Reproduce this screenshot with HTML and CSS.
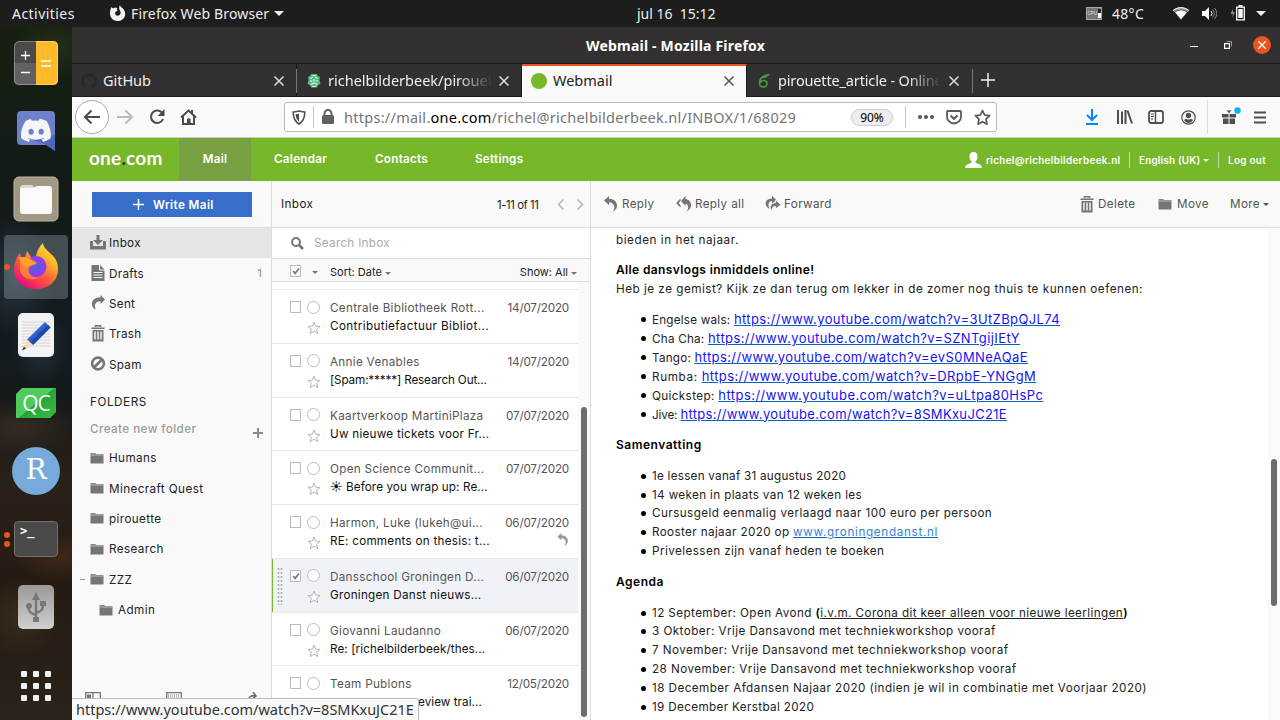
FILE: index.html
```html
<!DOCTYPE html>
<html lang="en">
<head>
<meta charset="utf-8">
<title>Webmail - Mozilla Firefox</title>
<link rel="stylesheet" href="styles.css">
</head>
<body>
<svg class="defs" width="0" height="0" aria-hidden="true">
  <defs>
    <symbol id="folder" viewBox="0 0 14 12"><path d="M.5 1h4.700l1 1h7.300v1H.5z" fill="#8a8a8a"/><path d="M.5 3h13v8.500H.5z" fill="#757575"/><path d="M.5 3.200h13" stroke="#c4c4c4" stroke-width=".7"/></symbol>
    <symbol id="close" viewBox="0 0 12 12"><path d="M1.500 1.500l9 9m0-9l-9 9" fill="none" stroke="currentColor" stroke-width="1.500"/></symbol>
    <symbol id="reply" viewBox="0 0 14 16"><path d="M0 4.500L5 0v2.700c5 .2 8 3 8 6.800 0 2.700-1.500 5-4.500 6.200 1.500-2 2.300-3.600 1.700-5.200C9.600 8 8 6.300 5 6.300V9z" fill="currentColor"/></symbol>
    <symbol id="trash" viewBox="0 0 14 17"><path d="M4.500 2V.8h5V2M.5 3.200h13" fill="none" stroke="#757575" stroke-width="1.500"/><path d="M1.500 5h11v11.500h-11z" fill="#757575"/><path d="M4 6.500v8M7 6.500v8M10 6.500v8" stroke="#f9f9f9" stroke-width="1.400"/></symbol>
    <symbol id="star" viewBox="0 0 14 14"><path d="M7 1l1.600 4.200 4.500.2-3.500 2.800 1.200 4.500L7 10.100l-3.800 2.600 1.200-4.500L.9 5.400l4.500-.2z" fill="#fff" stroke="#b5b5b5"/></symbol>
    <symbol id="check" viewBox="0 0 12 12"><path d="M2.500 6l2.500 2.800L9.600 3" fill="none" stroke="#777" stroke-width="2"/></symbol>
  </defs>
</svg>
<div class="desktop">
  <header class="topbar">
    <span class="activities">Activities</span>
    <svg class="ff-mono" width="17" height="17" viewBox="0 0 17 17"><path d="M8.500 3.500c-1 .8-.6 1.700.2 2.200-2 .4-2.700 1.500-2.600 2.900.2 2 2.900 2.800 4.500 1.400 1.300-1.200 1.300-3 .4-4.300C10 4.400 9.700 2.500 11 0c.3 1.500 1.200 2.200 2.600 3.300 3.700 3 3.300 8.700-.3 11.300-3.800 2.800-9.500 1.500-11.500-2.500C.4 9 .8 5.500 2.400 2c.6.800 1.300 1.200 2.300 1.200C6 2 7 2.200 8.500 3.500z" fill="#f2f2f2"/></svg>
    <span class="app-name">Firefox Web Browser</span>
    <i class="caret caret-white"></i>
    <span class="clock">jul 16&nbsp; 15:12</span>
    <div class="tray">
      <svg width="16" height="13" viewBox="0 0 16 13"><path d="M0 0h16v13H0z" fill="#777"/><path d="M.5 .5h15v12H.5z" fill="none" stroke="#aaa"/><text x="1.500" y="8" font-size="4.500" fill="#ddd" font-family="Liberation Sans">CPU</text><path d="M12 2h3v4h-3z" fill="#222"/><path d="M12 6h3v5h-3z" fill="#fff"/></svg>
      <span class="temp">48°C</span>
      <svg class="wifi" width="16" height="13" viewBox="0 0 16 13"><path d="M0 3.500C4.500-.8 11.500-.8 16 3.500l-1.500 1.700C10.500 2 5.500 2 1.500 5.200z" fill="#999"/><path d="M2 5.300c3.700-2.700 8.300-2.700 12 0L8 12.500z" fill="#fff"/><path d="M0 3.500C4.500-.3 11.500-.3 16 3.500" fill="none" stroke="#fff"/></svg>
      <svg class="vol" width="15" height="13" viewBox="0 0 15 13"><path d="M0 4h3l4-4v13L3 9H0z" fill="#fff"/><path d="M9 4q2 2.500 0 5" fill="none" stroke="#fff"/><path d="M10.500 2.500q3.500 4 0 8M12.500 1q4.500 5.500 0 11" fill="none" stroke="#888"/></svg>
      <svg class="batt" width="15" height="16" viewBox="0 0 15 16"><path d="M3 3.500L.5 9H3L2 13l3-6H3z" fill="#888"/><path d="M6.700 2.200h7.600v12.600H6.700z" fill="none" stroke="#fff" stroke-width="1.300"/><path d="M8.500 0h4v2h-4zM8.300 4h4.400v9H8.300z" fill="#fff"/></svg>
      <i class="caret caret-white tray-caret"></i>
    </div>
  </header>
  <div class="below">
    <nav class="dock">
      <div class="slot"><svg width="46" height="46" viewBox="0 0 46 46"><rect x="1" y="1" width="44" height="44" rx="5" fill="#4a4a4a"/><path d="M1 23h22v22H6q-5 0-5-5z" fill="#616161"/><path d="M23 1h17q5 0 5 5v34q0 5-5 5H23z" fill="#fdbb27"/><rect x="1.500" y="1.500" width="43" height="43" rx="5" fill="none" stroke="#fff" stroke-opacity=".3"/><path d="M8 15.500h9M12.500 11v9M8 32.500h9M28 21h10M28 26h10" stroke="#fff" stroke-width="1.300"/></svg></div>
      <div class="slot"><svg width="38" height="42" viewBox="0 0 38 42"><path d="M4 1h30q4 0 4 4v36l-8-6H4q-4 0-4-4V5q0-4 4-4z" fill="#6c80cb"/><path d="M38 25v16l-9-6-12-5z" fill="#5067bd"/><g transform="translate(4 5.500) scale(1.260)"><path d="M20.317 4.370a19.800 19.800 0 00-4.885-1.515.074.074 0 00-.79.037c-.21.375-.444.864-.608 1.250a18.300 18.300 0 00-5.487 0 12.600 12.600 0 00-.617-1.250.077.077 0 00-.079-.037A19.700 19.700 0 003.677 4.370C.533 9.046-.320 13.580.099 18.058a19.900 19.900 0 005.993 3.030c.462-.63.874-1.295 1.226-1.994a13 13 0 01-1.872-.892l.372-.292c3.928 1.793 8.180 1.793 12.062 0l.373.292a12.300 12.300 0 01-1.873.892c.36.698.772 1.362 1.225 1.993a19.800 19.800 0 006.002-3.030c.500-5.177-.838-9.674-3.290-13.687zM8.020 15.331c-1.183 0-2.157-1.086-2.157-2.419s.955-2.419 2.157-2.419c1.210 0 2.176 1.095 2.157 2.419 0 1.333-.956 2.419-2.157 2.419zm7.975 0c-1.183 0-2.157-1.086-2.157-2.419s.955-2.419 2.157-2.419c1.210 0 2.176 1.095 2.157 2.419 0 1.333-.946 2.419-2.157 2.419z" fill="#f5f5f5"/></g></svg></div>
      <div class="slot"><svg width="46" height="46" viewBox="0 0 46 46"><rect x="1" y="1" width="44" height="44" rx="5" fill="#a09882" stroke="#bbb5a2"/><path d="M7 12q0-3 3-3h9l4 4H7z" fill="#ded9cf"/><path d="M7 14q0-2 2-2h10q2 0 3-1 1-1 3-1h11q3 0 3 3v22q0 3-3 3H10q-3 0-3-3z" fill="#fafafa"/></svg></div>
      <div class="slot"><div class="active-app"><i class="run-dot"></i><svg width="48" height="48" viewBox="0 0 48 48"><defs><linearGradient id="fx" x1="1" y1="0" x2=".3" y2="1"><stop offset="0" stop-color="#fff24a"/><stop offset=".35" stop-color="#ffb62a"/><stop offset=".65" stop-color="#ff593c"/><stop offset="1" stop-color="#e80d78"/></linearGradient><radialGradient id="fxc"><stop offset="0" stop-color="#4b5fe0"/><stop offset="1" stop-color="#9a39ef"/></radialGradient></defs><path d="M31 0c0 4 4 7 8 11 5 4 7 9 7 15 0 12-9 20-22 20S2 38 2 26c0-6 2-11 6-16l1 5 4-1 2-6 4 6 5 1c0-6 3-11 7-15z" fill="url(#fx)"/><circle cx="24" cy="23.500" r="10.500" fill="url(#fxc)"/><path d="M8 14c4 1 7 0 11 2l6 4c-3 3-6 2-8 5-2 5 3 11 10 9-6 5-17 2-19-7z" fill="#ff8137"/><path d="M7 14c6 0 10 1 12 3l6 3c-4 2-8 1-10 4-4-1-7-4-8-10z" fill="#ffa12c"/></svg></div></div>
      <div class="slot"><svg width="38" height="46" viewBox="0 0 38 46"><rect x="1" y="1" width="36" height="44" rx="5" fill="#f3f3f3"/><path d="M5 10h28M5 13h28M5 16h28M5 19h28M5 22h28M5 25h28M5 28h28M5 31h28M5 34h28" stroke="#ccc" stroke-width=".8"/><path d="M28 10l5.500 5.500L16 33l-6-5.500z" fill="#2f62d0"/><path d="M31 13l2.500 2.500L16 33l-3-3z" fill="#1d48a7"/><path d="M10 27.500l6 5.500-10 5z" fill="#ffd9b6"/><path d="M7 34.500l2 2-4 2z" fill="#333"/></svg></div>
      <div class="slot"><div class="qc">QC</div></div>
      <div class="slot"><div class="rstudio">R</div></div>
      <div class="slot"><div class="terminal"><i class="run-dot"></i><i class="run-dot"></i>&gt;_</div></div>
      <div class="slot"><svg width="38" height="46" viewBox="0 0 38 46"><defs><linearGradient id="ub" x2="0" y2="1"><stop stop-color="#999"/><stop offset="1" stop-color="#d0d0d0"/></linearGradient></defs><rect x="1" y="1" width="36" height="44" rx="5" fill="url(#ub)"/><path d="M19 36V13M19 31c-6-2-7-3-8-9M19 29c6-2 7-3 7-10" fill="none" stroke="#777" stroke-width="2.400"/><path d="M15 16l4-8 4 8zM16 33h6v5h-6zM23 17h6v5h-6z" fill="#777"/><circle cx="12" cy="22" r="3" fill="#777"/></svg></div>
      <div class="apps"><i></i><i></i><i></i><i></i><i></i><i></i><i></i><i></i><i></i></div>
    </nav>
    <main class="window">
      <div class="titlebar">
        <span class="win-title">Webmail - Mozilla Firefox</span>
        <div class="win-buttons"><i class="min"></i><svg width="8" height="8" viewBox="0 0 8 8"><path d="M2.500 .5h5v5" fill="none" stroke="#999"/><path d="M.6 2.600h4.800v4.800H.6z" fill="none" stroke="#fff" stroke-width="1.200"/></svg><b class="win-close"><svg width="10" height="10"><use href="#close"/></svg></b></div>
      </div>
      <div class="tabs">
        <div class="tab tab1"><svg width="16" height="16" viewBox="0 0 24 24"><path d="M12 .297c-6.630 0-12 5.373-12 12 0 5.303 3.438 9.800 8.205 11.385.6.113.82-.258.82-.577 0-.285-.01-1.040-.015-2.040-3.338.724-4.042-1.610-4.042-1.610C4.422 18.070 3.633 17.700 3.633 17.700c-1.087-.744.084-.729.084-.729 1.205.084 1.838 1.236 1.838 1.236 1.070 1.835 2.809 1.305 3.495.998.108-.776.417-1.305.76-1.605-2.665-.3-5.466-1.332-5.466-5.930 0-1.310.465-2.380 1.235-3.220-.135-.303-.54-1.523.105-3.176 0 0 1.005-.322 3.300 1.230.96-.267 1.980-.399 3-.405 1.020.006 2.040.138 3 .405 2.280-1.552 3.285-1.230 3.285-1.230.645 1.653.24 2.873.12 3.176.765.84 1.230 1.910 1.230 3.220 0 4.610-2.805 5.625-5.475 5.920.42.36.81 1.096.81 2.220 0 1.606-.015 2.896-.015 3.286 0 .315.21.69.825.57C20.565 22.092 24 17.592 24 12.297c0-6.627-5.373-12-12-12" fill="#24292e"/></svg><span>GitHub</span><svg class="x" width="12" height="12"><use href="#close"/></svg></div>
        <div class="tab tab2"><svg width="16" height="16" viewBox="0 0 16 16"><path d="M5 1h6l1 2 2 1-.5 3 1 4-2.500 1-1 2.500H5L4 12l-2.500-1 1-4L2 4l2-1z" fill="#53b97b"/><path d="M4.500 5.500L7 4M11.500 5.500L9 4M4 8h2.500M9.500 8H12M4.500 11.500L8 10l3.500 1.500M8 6v2.500M6 13.500h4M6.500 2.500h3" stroke="#e9fff0" stroke-width="1.100" fill="none"/></svg><span class="fade">richelbilderbeek/pirouet</span><svg class="x" width="12" height="12"><use href="#close"/></svg></div>
        <div class="tab tab3"><i class="one-dot"></i><span>Webmail</span><svg class="x" width="12" height="12"><use href="#close"/></svg></div>
        <div class="tab tab4"><svg width="14" height="16" viewBox="0 0 14 16"><path d="M12.500 1.500C7 1.500 2.500 5 2.500 10.300c0 5 7.500 5 7.500.2C10 7 5.500 6.500 3.300 9.500M6 4c2.500 1.500 3.500-1 6-2.500" fill="none" stroke="#3f9d3f" stroke-width="1.600"/></svg><span class="fade">pirouette_article - Online</span><svg class="x" width="12" height="12"><use href="#close"/></svg></div>
        <svg class="plus" width="14" height="14" viewBox="0 0 14 14"><path d="M7 0v14M0 7h14" stroke="#eee" stroke-width="1.500"/></svg>
      </div>
      <div class="navbar">
        <div class="back"><svg width="18" height="16" viewBox="0 0 18 16"><path d="M8.500 1.500L2 8l6.500 6.500M2 8h15" fill="none" stroke="#4a4a4a" stroke-width="2"/></svg></div>
        <svg class="fwd" width="18" height="16" viewBox="0 0 18 16"><path d="M9.500 1.500L16 8l-6.500 6.500M16 8H1" fill="none" stroke="#b9b9b9" stroke-width="2"/></svg>
        <svg class="reload" width="16" height="16" viewBox="0 0 16 16"><path d="M13.500 4.500A6.200 6.200 0 1 0 14 10" fill="none" stroke="#4a4a4a" stroke-width="2"/><path d="M15.500 0v7H8.700z" fill="#4a4a4a"/></svg>
        <svg class="home" width="17" height="17" viewBox="0 0 17 17"><path d="M1 8.500L8.500 1.500 16 8.500M3 7.500V15h11V7.500" fill="none" stroke="#4a4a4a" stroke-width="2"/><path d="M7 9.500h3.500V15H7z" fill="#4a4a4a"/><path d="M11 1h2v4l-2-2z" fill="#4a4a4a"/></svg>
        <div class="urlbar">
          <svg class="shield" width="14" height="15" viewBox="0 0 14 15"><path d="M7 1C5 1.500 3 2 1.200 2c0 6 1.500 9.500 5.800 12 4.300-2.500 5.800-6 5.800-12C11 2 9 1.500 7 1z" fill="none" stroke="#4f4f4f" stroke-width="1.600"/><path d="M7 3.500v8C4.500 9.500 3.800 7.500 3.600 4.200z" fill="#4f4f4f"/></svg>
          <i class="vline"></i>
          <svg class="lock" width="12" height="15" viewBox="0 0 12 15"><rect y="6" width="12" height="9" rx="1.500" fill="#606060"/><path d="M2.500 7V4.500a3.500 3.500 0 0 1 7 0V7" fill="none" stroke="#606060" stroke-width="2"/></svg>
          <span class="url">https://mail.<b>one.com</b>/richel@richelbilderbeek.nl/INBOX/1/68029</span>
          <span class="zoom">90%</span>
          <i class="vline v2"></i>
          <svg class="dots" width="16" height="4" viewBox="0 0 16 4"><circle cx="2" cy="2" r="2"/><circle cx="8" cy="2" r="2"/><circle cx="14" cy="2" r="2"/></svg>
          <svg class="pocket" width="16" height="15" viewBox="0 0 16 15"><path d="M2 1h12q1 0 1 1v4.500a7 7 0 0 1-14 0V2q0-1 1-1z" fill="none" stroke="#5a5a5a" stroke-width="1.800"/><path d="M4.500 5.500L8 8.800l3.500-3.300" fill="none" stroke="#5a5a5a" stroke-width="2"/></svg>
          <svg class="fav" width="17" height="17" viewBox="0 0 17 17"><path d="M8.500 1.500l2.200 4.600 5 .6-3.700 3.500 1 5-4.500-2.500L4 15.200l1-5L1.300 6.700l5-.6z" fill="none" stroke="#5a5a5a" stroke-width="1.700" stroke-linejoin="round"/></svg>
        </div>
        <div class="tools">
          <svg width="12" height="16" viewBox="0 0 12 16"><path d="M6 0v11M1 6l5 5 5-5M0 15h12" fill="none" stroke="#0a84ff" stroke-width="2"/></svg>
          <svg width="16" height="14" viewBox="0 0 16 14"><path d="M1 0v14M5 1.500V14M8.500 0v14M10.500 .5l4.500 13" stroke="#4f4f4f" stroke-width="2"/></svg>
          <svg width="16" height="14" viewBox="0 0 16 14"><rect x="1" y="1" width="14" height="12" rx="2" fill="none" stroke="#4f4f4f" stroke-width="1.800"/><path d="M7.500 1v12" stroke="#4f4f4f" stroke-width="1.500"/><path d="M3 4h3M3 6.500h3M3 9h2" stroke="#4f4f4f"/></svg>
          <svg width="15" height="15" viewBox="0 0 15 15"><circle cx="7.500" cy="7.500" r="6.700" fill="none" stroke="#4f4f4f" stroke-width="1.200"/><circle cx="7.500" cy="5.500" r="2.700" fill="#4f4f4f"/><path d="M3 10c1-1 1.700-1.200 2.500-1q2 1 4 0c.8-.2 1.500 0 2.500 1-2.500 4-6.500 4-9 0z" fill="#4f4f4f"/></svg>
          <i class="tool-line"></i>
          <svg class="gift" width="19" height="18" viewBox="0 0 19 18"><path d="M0 7h6.500v3.500H0zM7.500 7H14v3.500H7.500zM1 11.500h5.500V17H1zM7.500 11.500H13V17H7.500z" fill="#4f4f4f"/><path d="M7 6.500L4.500 3 7 3.500 9.500 3z" fill="#4f4f4f"/><circle cx="15.500" cy="3.500" r="3.200" fill="#00b3f4"/></svg>
          <svg width="12" height="13" viewBox="0 0 12 13"><path d="M0 1.500h12M0 6.500h12M0 11.500h12" stroke="#4f4f4f" stroke-width="2"/></svg>
        </div>
      </div>
      <div class="greenbar">
        <span class="logo">one<em>.</em>com</span>
        <span class="nav nav-mail">Mail</span><span class="nav nav-cal">Calendar</span><span class="nav nav-con">Contacts</span><span class="nav nav-set">Settings</span>
        <div class="account">
          <svg width="17" height="16" viewBox="0 0 17 16"><path d="M8.500 0c3 0 4.300 2 4 5-.2 2-1 3.500-2 4.500v1.300l4.500 1.700q2 1 2 3.500H0q0-2.500 2-3.500l4.500-1.700V9.500c-1-1-1.800-2.500-2-4.500-.3-3 1-5 4-5z" fill="#fff"/></svg>
          <span class="who">richel@richelbilderbeek.nl</span><span class="lang">English (UK)<i class="caret"></i></span><span class="logout">Log out</span>
        </div>
      </div>
      <div class="mail">
        <aside class="sidebar">
          <div class="compose-row"><div class="compose"><svg width="11" height="11" viewBox="0 0 11 11"><path d="M5.500 0v11M0 5.500h11" stroke="#fff" stroke-width="1.500"/></svg><span>Write Mail</span></div></div>
          <ul class="boxes">
            <li class="selected"><svg width="16" height="15" viewBox="0 0 16 15"><path d="M0 6h3v5h10V6h3v8.500H0z" fill="#757575"/><path d="M6.500 0h3v5H13l-5 5-5-5h3.500z" fill="#757575"/></svg>Inbox</li>
            <li><svg width="15" height="16" viewBox="0 0 15 16"><path d="M1 0h7.500v5.500H14V16H1z" fill="#757575"/><path d="M9.500 0L14 4.500H9.500z" fill="#757575"/><path d="M3 7.500h9M3 10h9M3 12.500h9" stroke="#f9f9f9"/></svg>Drafts<span class="count">1</span></li>
            <li><svg width="15" height="16" viewBox="0 0 15 16"><path d="M14.500 4.500L10 0v2.500C5 2.300 1.500 4.500 1.500 9c0 2.700 1.500 4.700 4 5.500C4 12 4 9.500 5.200 8.200 6 7 7.700 6.200 10 6.300V9z" fill="#757575"/></svg>Sent</li>
            <li><svg width="15" height="17" viewBox="0 0 14 17"><use href="#trash"/></svg>Trash</li>
            <li><svg width="15" height="15" viewBox="0 0 15 15"><path d="M12 3L3 12" stroke="#757575" stroke-width="2.600"/><circle cx="7.500" cy="7.500" r="5.900" fill="none" stroke="#757575" stroke-width="2.600"/></svg>Spam</li>
          </ul>
          <div class="folders-title">FOLDERS</div>
          <div class="new-folder"><span>Create new folder</span><svg width="10" height="10" viewBox="0 0 10 10"><path d="M5 0v10M0 5h10" stroke="#8a8a8a" stroke-width="2"/></svg></div>
          <ul class="folders">
            <li><svg width="14" height="12"><use href="#folder"/></svg>Humans</li>
            <li><svg width="14" height="12"><use href="#folder"/></svg>Minecraft Quest</li>
            <li><svg width="14" height="12"><use href="#folder"/></svg>pirouette</li>
            <li><svg width="14" height="12"><use href="#folder"/></svg>Research</li>
            <li class="open"><svg width="14" height="12"><use href="#folder"/></svg>ZZZ</li>
            <li class="child"><svg width="14" height="12"><use href="#folder"/></svg>Admin</li>
          </ul>
          <div class="side-foot">
            <svg width="16" height="10" viewBox="0 0 16 10"><path d="M.7 .7h14.600V10H.7zM8 0v10" fill="none" stroke="#777" stroke-width="1.300"/><path d="M2 2.500h4v7H2z" fill="#777"/></svg>
            <svg width="16" height="10" viewBox="0 0 16 10"><path d="M.7 .7h14.600V10H.7z" fill="none" stroke="#777" stroke-width="1.300"/><path d="M2 3h12M2 5h12" stroke="#777" stroke-dasharray="1 1"/></svg>
            <svg width="10" height="12" viewBox="0 0 10 12"><path d="M1 10c0-5 3-7 7-6M6 0l3 4-4 3" fill="none" stroke="#666" stroke-width="1.500"/></svg>
          </div>
        </aside>
        <section class="list">
          <div class="list-head"><span class="list-title">Inbox</span><span class="pages">1-11 of 11</span><svg width="27" height="11" viewBox="0 0 27 11"><path d="M6.500 .5l-5 5 5 5M20.500 .5l5 5-5 5" fill="none" stroke="#b4b4b4" stroke-width="1.500"/></svg></div>
          <div class="search"><svg width="13" height="13" viewBox="0 0 13 13"><circle cx="5" cy="5" r="3.900" fill="none" stroke="#757575" stroke-width="2"/><path d="M8 8l4 4" stroke="#757575" stroke-width="2.500"/></svg><span>Search Inbox</span></div>
          <div class="sort"><i class="box"><svg width="10" height="10"><use href="#check"/></svg></i><i class="caret c1"></i><span class="by">Sort: Date<i class="caret"></i></span><span class="show">Show: All<i class="caret"></i></span></div>
          <div class="messages">
            <ul class="rows">
              <li><i class="box"></i><i class="ring"></i><span class="from">Centrale Bibliotheek Rott...</span><span class="date">14/07/2020</span><svg class="star" width="14" height="14"><use href="#star"/></svg><span class="subj wide">Contributiefactuur Bibliot...</span></li>
              <li><i class="box"></i><i class="ring"></i><span class="from">Annie Venables</span><span class="date">14/07/2020</span><svg class="star" width="14" height="14"><use href="#star"/></svg><span class="subj tight">[Spam:*****] Research Out...</span></li>
              <li><i class="box"></i><i class="ring"></i><span class="from">Kaartverkoop MartiniPlaza</span><span class="date">07/07/2020</span><svg class="star" width="14" height="14"><use href="#star"/></svg><span class="subj">Uw nieuwe tickets voor Fr...</span></li>
              <li><i class="box"></i><i class="ring"></i><span class="from">Open Science Communit...</span><span class="date">07/07/2020</span><svg class="star" width="14" height="14"><use href="#star"/></svg><span class="subj sun">☀ Before you wrap up: Re...</span></li>
              <li><i class="box"></i><i class="ring"></i><span class="from">Harmon, Luke (lukeh@ui...</span><span class="date">06/07/2020</span><svg class="star" width="14" height="14"><use href="#star"/></svg><span class="subj">RE: comments on thesis: t...</span><svg class="replied" width="12" height="13" viewBox="0 0 14 16"><use href="#reply"/></svg></li>
              <li class="current"><i class="box"><svg width="10" height="10"><use href="#check"/></svg></i><i class="ring"></i><span class="from">Dansschool Groningen D...</span><span class="date">06/07/2020</span><svg class="star" width="14" height="14"><use href="#star"/></svg><span class="subj">Groningen Danst nieuws...</span></li>
              <li><i class="box"></i><i class="ring"></i><span class="from">Giovanni Laudanno</span><span class="date">06/07/2020</span><svg class="star" width="14" height="14"><use href="#star"/></svg><span class="subj sun">Re: [richelbilderbeek/thes...</span></li>
              <li class="last"><i class="box"></i><i class="ring"></i><span class="from">Team Publons</span><span class="date">12/05/2020</span><svg class="star" width="14" height="14"><use href="#star"/></svg><span class="subj end">eview trai...</span></li>
            </ul>
            <div class="track"><i></i></div>
          </div>
        </section>
        <section class="reader">
          <div class="actions">
            <span class="a-reply"><svg width="14" height="16"><use href="#reply"/></svg>Reply</span>
            <span class="a-all"><svg width="16" height="16" viewBox="0 0 16 16"><path d="M0 7l4.500-4.500v2.300L2.600 7l1.900 2v2.500z" fill="#757575"/><path d="M5 5l4.500-5v3c3.700.5 5.500 2.500 5.500 6 0 3-1.500 5-4.500 6.500 1.500-2 2-3.700 1.500-5.300-.3-1.200-1-2.200-2.500-2.400V10z" fill="#757575"/></svg>Reply all</span>
            <span class="a-fwd"><svg width="16" height="16" viewBox="0 0 16 16"><path d="M7 0l4.500 4L7 7.500V5C3.500 5.500 2.500 9 4.500 13-1.500 10-.5 2.500 7 2.400z" fill="#757575"/><path d="M10.500 4l5.500 4.500-5.500 4.500v-2.700C8 10.300 7 12 6.500 15 4 10.500 6 7 10.500 6.700z" fill="#757575" stroke="#f9f9f9" stroke-width=".7"/></svg>Forward</span>
            <span class="a-del"><svg width="14" height="17"><use href="#trash"/></svg>Delete</span>
            <span class="a-move"><svg width="14" height="12"><use href="#folder"/></svg>Move</span>
            <span class="a-more">More<i class="caret"></i></span>
          </div>
          <div class="body">
            <article class="letter">
              <p class="first">bieden in het najaar.</p>
              <h2 class="first-head">Alle dansvlogs inmiddels online!</h2>
              <p class="intro">Heb je ze gemist? Kijk ze dan terug om lekker in de zomer nog thuis te kunnen oefenen:</p>
              <ul class="videos">
                <li>Engelse wals: <a>https://www.youtube.com/watch?v=3UtZBpQJL74</a></li>
                <li>Cha Cha: <a>https://www.youtube.com/watch?v=SZNTgijIEtY</a></li>
                <li>Tango: <a>https://www.youtube.com/watch?v=evS0MNeAQaE</a></li>
                <li class="rumba">Rumba: <a>https://www.youtube.com/watch?v=DRpbE-YNGgM</a></li>
                <li class="quick">Quickstep: <a>https://www.youtube.com/watch?v=uLtpa80HsPc</a></li>
                <li class="jive">Jive: <a>https://www.youtube.com/watch?v=8SMKxuJC21E</a></li>
              </ul>
              <h2 class="wide-head">Samenvatting</h2>
              <ul class="summary">
                <li>1e lessen vanaf 31 augustus 2020</li>
                <li>14 weken in plaats van 12 weken les</li>
                <li>Cursusgeld eenmalig verlaagd naar 100 euro per persoon</li>
                <li>Rooster najaar 2020 op <a class="site">www.groningendanst.nl</a></li>
                <li>Privelessen zijn vanaf heden te boeken</li>
              </ul>
              <h2 class="wide-head agenda-head">Agenda</h2>
              <ul class="agenda">
                <li>12 September: Open Avond <b>(</b><u>i.v.m. Corona dit keer alleen voor nieuwe leerlingen</u><b>)</b></li>
                <li>3 Oktober: Vrije Dansavond met techniekworkshop vooraf</li>
                <li>7 November: Vrije Dansavond met techniekworkshop vooraf</li>
                <li>28 November: Vrije Dansavond met techniekworkshop vooraf</li>
                <li>18 December Afdansen Najaar 2020 (indien je wil in combinatie met Voorjaar 2020)</li>
                <li>19 December Kerstbal 2020</li>
              </ul>
            </article>
            <div class="track reader-track"><i></i></div>
          </div>
        </section>
      </div>
    </main>
  </div>
  <div class="status">https://www.youtube.com/watch?v=8SMKxuJC21E</div>
</div>
</body>
</html>
```
FILE: styles.css
```css
* { box-sizing: border-box; }
body { margin: 0; font-family: Inter, "Liberation Sans", sans-serif; color: #222; }
ul { list-style: none; margin: 0; padding: 0; }
svg { display: block; flex: none; }
.defs { position: absolute; }
.desktop { position: relative; width: 1280px; height: 720px; overflow: hidden; display: flex; flex-direction: column; background: #1d1d1d; white-space: nowrap; }
.topbar, .titlebar, .tabs, .url, .zoom, .status { font-family: "Noto Sans", "Open Sans", sans-serif; }
.caret { display: inline-block; border: 3px solid transparent; border-top-color: currentColor; border-bottom: 0; vertical-align: middle; margin-left: 3px; }

/* GNOME top bar */
.topbar { height: 27px; flex: none; display: flex; align-items: center; color: #eee; font-size: 14px; background: #1d1d1d; padding-bottom: 1px; }
.activities { width: 97px; padding-left: 12px; letter-spacing: .45px; }
.ff-mono { margin-left: 12px; }
.app-name { width: 138px; margin-left: 5px; letter-spacing: .15px; }
.caret-white { border-width: 5px; border-bottom: 0; margin: 0 0 0 5px; }
.clock { margin-left: 353px; width: 90px; }
.tray { margin-left: auto; margin-right: 14px; display: flex; align-items: center; }
.temp { width: 71px; padding-left: 10px; letter-spacing: .3px; }
.vol { margin-left: 13px; }
.batt { margin-left: 13px; }
.tray-caret { margin-left: 11px; }

/* Dock */
.below { flex: 1; display: flex; min-height: 0; }
.dock { width: 72px; flex: none; padding-top: 2px; background:
  radial-gradient(ellipse 40px 30px at 55px 20px, #26351cbb, transparent),
  radial-gradient(ellipse 40px 60px at 15px 250px, #2a3b47cc, transparent),
  radial-gradient(ellipse 30px 40px at 40px 320px, #25333ecc, transparent),
  radial-gradient(ellipse 60px 30px at 20px 400px, #4a382a88, transparent),
  radial-gradient(ellipse 50px 24px at 60px 530px, #5a342077, transparent),
  radial-gradient(ellipse 40px 40px at 20px 590px, #463a2288, transparent),
  linear-gradient(#17200f, #131b18 20%, #131b20 45%, #17191a 55%, #2a2118 65%, #251b12 80%, #29231a); }
.slot { height: 68px; display: flex; align-items: center; justify-content: center; }
.active-app { width: 64px; height: 64px; border-radius: 4px; background: #a5b5bd55; display: flex; align-items: center; justify-content: center; position: relative; }
.run-dot { position: absolute; width: 6px; height: 6px; border-radius: 50%; background: #e95420; left: 0; top: 29px; }
.qc { width: 40px; height: 30px; background: linear-gradient(140deg, #4fca5c 50%, #25a337 51%, #35c247); clip-path: polygon(6px 0, 100% 0, 100% 24px, 34px 100%, 0 100%, 0 6px); color: #fff; font: 500 21px/30px "Open Sans", sans-serif; text-align: center; letter-spacing: -1px; }
.rstudio { width: 48px; height: 48px; border-radius: 50%; background: #75aadb; color: #fff; font: 28px/46px "DejaVu Serif", serif; text-align: center; }
.terminal { position: relative; width: 44px; height: 36px; border-radius: 4px; background: #4a4a4a; border: 1px solid #707070; color: #fff; font: bold 12px/16px "DejaVu Sans Mono", monospace; padding: 1px 5px; }
.terminal .run-dot { left: -11px; top: 10px; }
.terminal .run-dot + .run-dot { top: 19px; }
.apps { width: 30px; margin: 30px auto 0; display: grid; grid-template-columns: repeat(3, 6px); gap: 6px; }
.apps i { height: 6px; border-radius: 1px; background: #f0f0f0; }

/* Window chrome */
.window { width: 1208px; display: flex; flex-direction: column; background: #fff; }
.titlebar { height: 37px; flex: none; background: #333031; border-bottom: 1px solid #1c1b1b; display: flex; align-items: center; color: #fff; padding-left: 514px; }
.win-title { font-weight: 700; font-size: 14px; width: 200px; letter-spacing: .2px; }
.win-buttons { margin-left: auto; margin-right: 9px; display: flex; align-items: center; }
.min { width: 8px; height: 1px; background: #fff; margin: 3px 26px 0 0; }
.win-close { width: 18px; height: 18px; border-radius: 50%; background: #e95420; margin-left: 21px; display: flex; align-items: center; justify-content: center; }
.tabs { height: 33px; flex: none; display: flex; background: #333031; color: #eee; font-size: 14.500px; border-bottom: 1px solid #1c1b1b; }
.tab { display: flex; align-items: center; height: 33px; padding: 0 11px 0 9px; width: 225px; border-right: 1px solid #1c1b1b; }
.tab span { margin-left: 6px; line-height: 24px; padding-bottom: 2px; }
.tab .x { margin-left: auto; color: #ddd; }
.tab1 { position: relative; }
.tab1 span { letter-spacing: -.05px; }
.tab1::after { content: ""; width: 1px; height: 24px; background: #777; position: absolute; right: -1px; top: 5px; }
.tab3 { background: #f9f9fa; color: #222; border-top: 2px solid #e95420; padding-bottom: 2px; }
.tab3 .x { color: #555; }
.tab .fade { width: 165px; flex: none; -webkit-mask: linear-gradient(90deg, #000 78%, transparent 100%); mask: linear-gradient(90deg, #000 78%, transparent 100%); }
.one-dot { width: 16px; height: 16px; border-radius: 50%; background: #76b82a; }
.tab4 { border-right: 0; padding-left: 10px; position: relative; }
.tab4::after { content: ""; width: 1px; height: 24px; background: #777; position: absolute; right: -1px; top: 5px; }
.tab4 .fade { margin-left: 7px; letter-spacing: -.15px; width: 166px; -webkit-mask: linear-gradient(90deg, #000 78%, transparent 98%); mask: linear-gradient(90deg, #000 78%, transparent 98%); }
.tab4 .x { margin-left: 4px; }
.plus { align-self: center; margin-left: 9px; }
.navbar { height: 41px; flex: none; background: #f9f9fa; border-bottom: 1px solid #ccc; display: flex; align-items: center; padding-left: 3px; }
.back { width: 34px; height: 34px; border: 1px solid #aaa; border-radius: 50%; background: #fff; display: flex; align-items: center; justify-content: center; flex: none; }
.fwd { margin-left: 7px; }
.reload { margin-left: 15px; }
.home { margin-left: 15px; }
.urlbar { width: 713px; height: 30px; margin-left: 87px; border: 1px solid #bbb; border-radius: 3px; background: #fff; display: flex; align-items: center; flex: none; padding-left: 7px; }
.vline { width: 1px; height: 22px; background: #c4c4c4; margin: 0 8px 0 7px; }
.lock { margin-top: -2px; }
.url { width: 500px; margin-left: 10px; color: #757575; font-size: 14.500px; letter-spacing: .27px; }
.url b { font-weight: 400; color: #000; }
.zoom { width: 42px; height: 17px; border: 1px solid #ccc; border-radius: 9px; background: #eee; color: #000; font-size: 12px; line-height: 15px; text-align: center; margin-left: 7px; }
.v2 { margin: 0 12px 0 12px; }
.dots { fill: #555; }
.pocket { margin-left: 12px; }
.fav { margin-left: 12px; }
.tools { margin-left: 89px; display: flex; align-items: center; }
.tools > svg:nth-of-type(2) { margin-left: 19px; }
.tools > svg:nth-of-type(3) { margin-left: 15px; }
.tools > svg:nth-of-type(4) { margin-left: 17px; }
.tool-line { width: 1px; height: 34px; background: #ddd; margin-left: 11px; }
.tools .gift { margin: -3px 14px 0 14px; }
.tools > svg:last-child { margin-left: -1px; }

/* one.com header */
.greenbar { height: 43px; flex: none; background: #76b82a; display: flex; color: #fff; font-size: 11.700px; font-weight: 600; line-height: 42px; letter-spacing: .25px; }
.logo { width: 107px; padding-left: 17px; font: 700 19px/40px Lato, sans-serif; letter-spacing: .2px; }
.logo em { color: #333; font-style: normal; }
.nav-mail { width: 72px; text-align: center; background: #77a042; }
.nav-cal { width: 101px; padding-left: 23px; }
.nav-con { width: 100px; padding-left: 23px; }
.nav-set { padding-left: 23px; }
.account { margin-left: auto; display: flex; align-items: center; font-size: 9.900px; line-height: 16px; letter-spacing: .32px; }
.who { width: 147px; padding-left: 4px; }
.lang { width: 89px; padding-left: 9px; border-left: 1px solid #c5e0a5; letter-spacing: .2px; }
.logout { width: 62px; padding-left: 9px; border-left: 1px solid #c5e0a5; }

/* Mail panes */
.mail { flex: 1; display: flex; min-height: 0; font-size: 11.700px; letter-spacing: .2px; }
.sidebar { width: 200px; flex: none; background: #f9f9f9; border-right: 1px solid #ddd; display: flex; flex-direction: column; letter-spacing: .4px; }
.compose-row { height: 47px; border-bottom: 1px solid #ddd; padding: 11px 0 0 20px; }
.compose { width: 160px; height: 25px; background: #386fca; color: #fff; font-weight: 600; display: flex; align-items: center; padding-left: 41px; }
.compose span { margin-left: 9px; }
.boxes li { height: 30.400px; display: flex; align-items: center; padding-left: 18px; letter-spacing: .3px; }
.boxes svg { width: 16px; margin: -2px 3px 0 0; }
.boxes .selected { background: #e5e5e5; }
.count { margin-left: auto; margin-right: 9px; color: #7a8794; font-size: 10.500px; }
.folders-title { margin: 14px 0 0 18px; line-height: 17px; letter-spacing: .55px; }
.new-folder { display: flex; padding: 10px 8px 0 18px; line-height: 17px; color: #999; font-weight: 500; justify-content: space-between; }
.new-folder svg { margin-top: 7px; }
.folders { margin-top: 5px; }
.folders li { height: 30.400px; display: flex; align-items: center; padding-left: 18px; }
.folders svg { margin: -1px 5px 0 0; }
.folders .open { padding-left: 8px; }
.folders .open::before { content: ""; width: 5px; height: 1px; background: #999; margin-right: 5px; }
.folders .child { padding-left: 27px; }
.side-foot { display: flex; justify-content: space-between; margin: auto 14px 17px 13px; height: 11px; }

.list { width: 319px; flex: none; border-right: 1px solid #ddd; display: flex; flex-direction: column; }
.list-head { height: 47px; flex: none; background: #f9f9f9; border-bottom: 1px solid #ddd; display: flex; align-items: center; padding-left: 9px; }
.list-title { width: 216px; letter-spacing: .4px; }
.pages { width: 60px; font-size: 11.300px; letter-spacing: -.4px; padding-top: 2px; }
.search { height: 31px; flex: none; border-bottom: 1px solid #ddd; display: flex; align-items: center; padding-left: 19px; color: #aaa; }
.search span { margin-left: 10px; letter-spacing: .3px; }
.sort { height: 23px; flex: none; border-bottom: 1px solid #ddd; background: #f9f9f9; display: flex; align-items: center; padding: 4px 13px 0 18px; font-size: 11px; letter-spacing: 0; line-height: 22px; }
.sort .caret { color: #777; }
.box { width: 11px; height: 12px; border: 1px solid #bbb; background: #fff; flex: none; }
.sort .box { background: none; margin-top: -3px; }
.c1 { margin-left: 11px; }
.by { margin-left: 12px; }
.show { margin-left: auto; }
.messages { flex: 1; min-height: 0; display: flex; overflow: hidden; }
.rows { width: 306px; padding-top: 7px; }
.rows li { height: 53.750px; border-top: 1px solid #e8e8e8; display: grid; grid-template-columns: 11px 13px 160px 1fr; grid-template-rows: 18px 18px; column-gap: 7px; padding: 9px 9px 0 18px; align-items: center; line-height: 18px; position: relative; }
.ring { width: 13px; height: 13px; border: 1px solid #bbb; border-radius: 50%; background: #fff; margin: -2px 0 0 -1px; }
.rows .box { margin-top: -2px; }
.from { padding-left: 2px; color: #555; letter-spacing: .3px; }
.date { text-align: right; color: #555; letter-spacing: -.2px; }
.star { grid-column: 2; margin: 4px 0 0 -1px; }
.subj { grid-column: 3; padding-left: 2px; color: #111; letter-spacing: .25px; }
.subj.wide { letter-spacing: .37px; }
.subj.tight { letter-spacing: -.14px; }
.subj.sun { letter-spacing: .1px; }
.subj.end { padding-left: 90px; letter-spacing: .05px; }
.replied { justify-self: end; color: #999; margin-top: -3px; }
.rows .current { background: #f1f2f7; box-shadow: inset 1px 0 #76b82a; }
.current::before { content: ""; position: absolute; left: 5px; top: 8px; width: 6px; height: 38px; background: radial-gradient(circle, #aaa 0 .9px, transparent 1.2px) 0 0 / 3px 4px; }
.track { width: 12px; background: #fafafa; }
.track i { display: block; width: 6px; height: 310px; border-radius: 3px; background: #6d6d6d; margin: 125px 0 0 3px; }

.reader { flex: 1; display: flex; flex-direction: column; min-width: 0; }
.actions { height: 47px; flex: none; background: #f9f9f9; border-bottom: 1px solid #ddd; display: flex; align-items: center; color: #555; padding-left: 13px; letter-spacing: .35px; }
.actions span { display: flex; align-items: center; }
.actions svg { color: #757575; margin-right: 4px; }
.a-reply { width: 72px; }
.actions .a-all svg, .actions .a-fwd svg { margin-right: 3px; }
.a-all { width: 89px; }
.a-fwd { width: 93px; }
.a-del { margin-left: 222px; width: 78px; }
.actions .a-move svg { margin-right: 5px; }
.a-move { width: 72px; }
.body { flex: 1; min-height: 0; display: flex; overflow: hidden; }
.letter { flex: 1; padding-left: 25px; color: #222; letter-spacing: .45px; }
.letter p { margin: 0; line-height: 19px; letter-spacing: .5px; }
.letter .first { padding-top: 3px; letter-spacing: .55px; }
.letter h2 { font-size: 12px; font-weight: 600; color: #000; margin: 11.500px 0 0; line-height: 19px; letter-spacing: 0; }
.letter .first-head { margin-top: 10px; letter-spacing: .37px; }
.letter .wide-head { letter-spacing: .5px; }
.letter .agenda-head { margin-top: 11px; }
.letter .intro { padding-top: 1px; }
.letter ul { margin: 12.500px 0 0 36px; }
.letter .videos { margin-top: 11.300px; }
.letter li { line-height: 18.900px; height: 18.900px; position: relative; }
.letter li::before { content: ""; position: absolute; left: -11px; top: 7px; width: 5px; height: 5px; border-radius: 50%; background: #000; }
.letter a { font-size: 13px; color: #1414f0; text-decoration: underline; text-decoration-color: #0563c1; letter-spacing: .4px; }
.videos li { letter-spacing: .22px; }
.videos .rumba { letter-spacing: .65px; }
.videos .quick { letter-spacing: .37px; }
.videos .quick a { letter-spacing: .45px; }
.videos .jive { letter-spacing: -.15px; }
.videos .jive a { letter-spacing: .33px; }
.summary li { letter-spacing: .43px; }
.summary li:nth-child(-n+2) { letter-spacing: .25px; }
.summary li:nth-child(2) { letter-spacing: .35px; }
.summary li:nth-child(4) { letter-spacing: .37px; }
.letter .site { font-size: 11.700px; color: #3a7fd0; letter-spacing: .67px; }
.agenda li { letter-spacing: .44px; }
.agenda li:first-child { letter-spacing: .4px; }
.agenda li:last-child { letter-spacing: .35px; }
.letter b { color: #000; font-weight: 600; }
.reader-track i { height: 147px; margin-top: 231px; }
.status { position: absolute; left: 72px; bottom: 0; width: 347px; height: 22px; background: #f9f9fa; border: 1px solid #bbb; border-left: 0; border-bottom: 0; border-radius: 0 3px 0 0; font-size: 14.500px; line-height: 21px; padding-left: 4px; color: #333; }
```
